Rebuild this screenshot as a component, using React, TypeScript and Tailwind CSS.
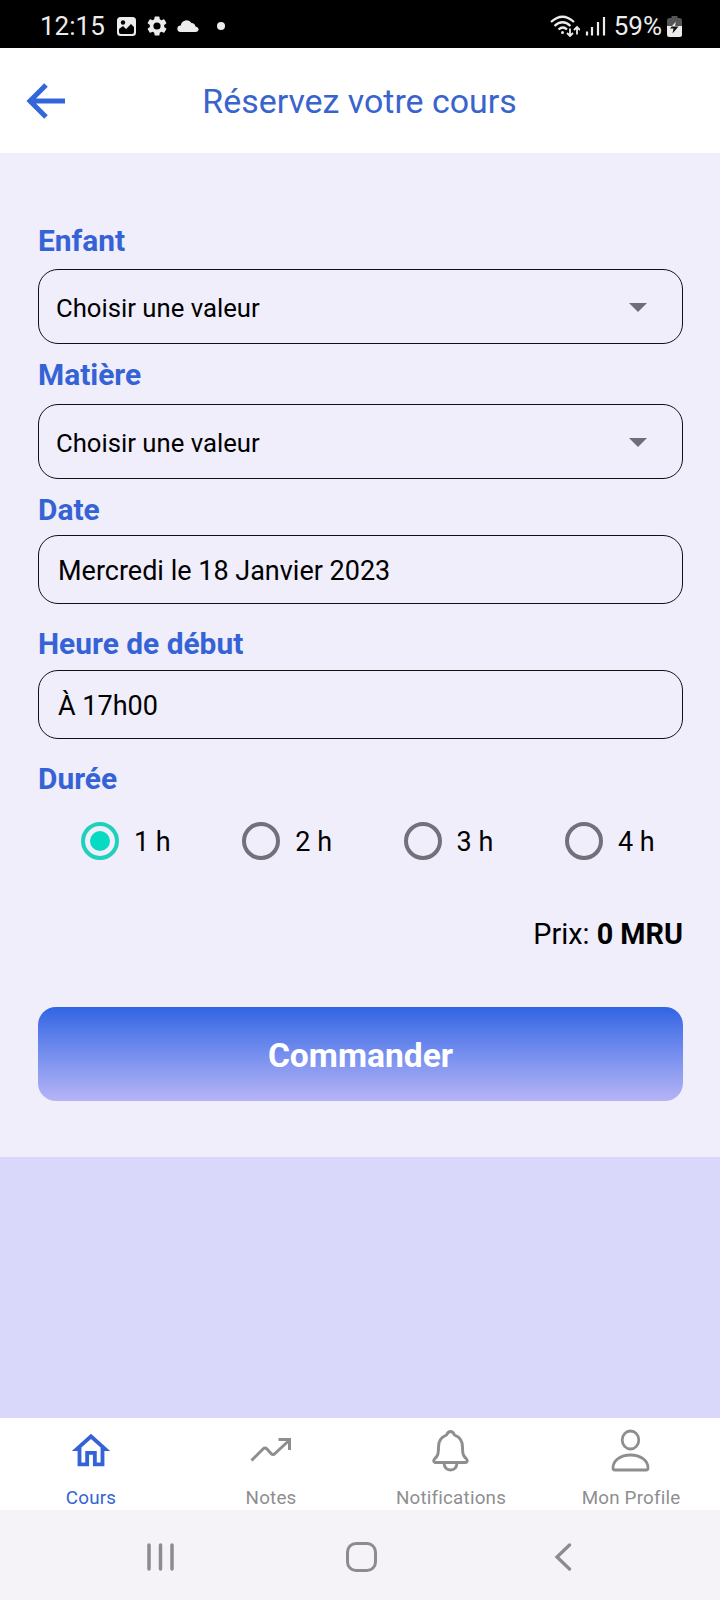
import type { ReactNode } from 'react'

const DURATIONS = ['1 h', '2 h', '3 h', '4 h']

function StatusBar() {
  return (
    <div className="flex h-12 items-center bg-black pt-1 pr-[38px] pl-10 text-[26px] leading-8 text-[#ececec]">
      <span>12:15</span>
      <svg className="ml-3 h-[19px] w-[19px]" viewBox="0 0 19 19" fill="none">
        <rect width="19" height="19" rx="3.5" fill="#ececec" />
        <path d="M2 14v-2l4-3 3 3 5-5 3 3v5q0 2-2 2H4q-2 0-2-2z" fill="#000" />
        <circle cx="6" cy="5.5" r="2.2" fill="#000" />
      </svg>
      <svg className="ml-[9px] h-6 w-6" viewBox="0 0 24 24" fill="currentColor">
        <path d="M19.14 12.94c.04-.3.06-.61.06-.94s-.02-.64-.07-.94l2.03-1.58a.5.5 0 0 0 .12-.61l-1.92-3.32a.5.5 0 0 0-.59-.22l-2.39.96a7 7 0 0 0-1.62-.94l-.36-2.54a.48.48 0 0 0-.48-.41h-3.84a.48.48 0 0 0-.47.41l-.36 2.54c-.59.24-1.13.57-1.62.94l-2.39-.96a.48.48 0 0 0-.59.22L2.74 8.87a.48.48 0 0 0 .12.61l2.03 1.58a6 6 0 0 0 0 1.88l-2.03 1.58a.5.5 0 0 0-.12.61l1.92 3.32c.12.22.37.29.59.22l2.39-.96c.5.38 1.03.7 1.62.94l.36 2.54c.05.24.24.41.48.41h3.84c.24 0 .44-.17.47-.41l.36-2.54a7 7 0 0 0 1.62-.94l2.39.96c.22.08.47 0 .59-.22l1.92-3.32a.48.48 0 0 0-.12-.61zM12 15.6a3.6 3.6 0 1 1 0-7.2 3.6 3.6 0 0 1 0 7.2" />
      </svg>
      <svg className="ml-2 h-[14px] w-[22px]" viewBox="0 0 22 14" fill="currentColor">
        <path d="M3.5 13a3.3 3.3 0 0 1 .3-6.6A5.8 5.8 0 0 1 14.5 4q3.3.4 4 3.5Q22 8.5 21.5 11q-.5 2-3 2z" />
      </svg>
      <span className="ml-[18px] h-2 w-2 rounded-full bg-[#ececec]" />
      <svg className="ml-auto h-6 w-[30px]" viewBox="0 0 30 24" fill="none" stroke="currentColor" strokeWidth="2.2">
        <path d="M1 8q11.5-10.5 23 0M4.5 12q8-7.5 16 0M8.5 15.5q4.5-4 8.5 0" />
        <circle cx="12.5" cy="18.5" r="1.5" fill="currentColor" stroke="none" />
        <path d="M20 14.5v7m-3-2.5 3 3 3-3M27 20.5v-7m-3 2.5 3-3 3 3" strokeWidth="1.8" />
      </svg>
      <svg className="h-5 w-[26px]" viewBox="0 0 26 20" stroke="currentColor" strokeWidth="2.2">
        <path d="M7 19.5v-4M12 19.5V11M18 19.5V6M24 19.5V1" />
      </svg>
      <span className="ml-2">59%</span>
      <svg className="ml-[5px] h-[21px] w-[15px]" viewBox="0 0 15 21">
        <path d="M4.5 0h6v2h2Q15 2 15 4.5V11H0V4.5Q0 2 2.5 2h2z" fill="#555" />
        <path d="M0 10h15v8.5Q15 21 12.5 21h-10Q0 21 0 18.5z" fill="#ececec" />
        <path d="M9 5.5 3 12.5h3.5l-1 5 6-7H8z" fill="#111" />
        <path d="M9 5.5 4.5 10.5H8z" fill="#ececec" />
      </svg>
    </div>
  )
}

function Header() {
  return (
    <header className="flex h-[105px] items-center bg-white pl-[26px] text-[#3864cc]">
      <svg className="h-9 w-10" viewBox="0 0 40 36" fill="none" stroke="#3366dd" strokeWidth="5">
        <path d="M39 18H4M20 2 4 18l16 16" />
      </svg>
      <h1 className="flex-1 pt-0.5 pr-[67px] text-center text-[33.9px] leading-10">Réservez votre cours</h1>
    </header>
  )
}

function Label({ children }: { children: ReactNode }) {
  return <div className="text-[29.9px] leading-[34px] font-bold text-[#3563d6]">{children}</div>
}

function SelectField({ label, className }: { label: string; className: string }) {
  return (
    <div className={`flex flex-col justify-between ${className}`}>
      <Label>{label}</Label>
      <button className="flex h-[75px] w-full items-center justify-between rounded-[20px] border border-[#111] pt-0.5 pr-[35px] pl-[17px] text-[25.7px] leading-8 text-black">
        Choisir une valeur
        <svg className="h-[9px] w-[18px]" viewBox="0 0 18 9" fill="#6f6d78">
          <path d="M0 0h18L9 9z" />
        </svg>
      </button>
    </div>
  )
}

function TextField({ label, value, className }: { label: string; value: string; className: string }) {
  return (
    <div className={`flex flex-col justify-between ${className}`}>
      <Label>{label}</Label>
      <div className="flex h-[69px] items-center rounded-[20px] border border-[#111] pt-0.5 pl-[19px] text-[27px] leading-8 text-black">
        {value}
      </div>
    </div>
  )
}

function Tab({ label, active, children }: { label: string; active?: boolean; children: ReactNode }) {
  return (
    <button className={active ? 'flex flex-col items-center text-[#3563d6]' : 'flex flex-col items-center text-[#8e8e90]'}>
      <span className="flex h-[68px] flex-col">{children}</span>
      <span className="pl-0.5 text-[18.8px] leading-6 tracking-[0.2px]">{label}</span>
    </button>
  )
}

function TabBar() {
  return (
    <nav className="grid h-[92px] grid-cols-4 bg-white">
      <Tab label="Cours" active>
        <svg className="mt-2.5 ml-px h-[46px] w-[46px]" viewBox="0 0 24 24" fill="currentColor">
          <path d="M12 5.69l5 4.5V18h-2v-6H9v6H7v-7.81l5-4.5M12 3 2 12h3v8h6v-6h2v6h6v-8h3z" />
        </svg>
      </Tab>
      <Tab label="Notes">
        <svg className="mt-[18px] h-7 w-[42px]" viewBox="0 0 42 28" fill="none" stroke="currentColor" strokeWidth="3">
          <path d="M2.5 24.5 14 13q2-2 4 0l4 4.5q2 2 4 0L40.5 4M29.5 3.5h11V14" />
        </svg>
      </Tab>
      <Tab label="Notifications">
        <svg className="mt-[11px] h-[43px] w-[38px]" viewBox="0 0 38 43" fill="none" stroke="currentColor" strokeWidth="2.9" strokeLinejoin="round">
          <path d="M19.5 2.5q-2.5 0-4 3.5-8 3-8 12c0 8-1 9-4 12-1.500 2-.5 3.500 1 3.500h30c1.500 0 2.500-1.500 1-3.500-3-3-4-4-4-12q0-9-8-12-1.500-3.500-4-3.500zM13 34q.5 7 6.500 7t6.500-7" />
        </svg>
      </Tab>
      <Tab label="Mon Profile">
        <svg className="mt-[11px] h-[43px] w-10" viewBox="0 0 40 43" fill="none" stroke="currentColor" strokeWidth="2.8">
          <ellipse cx="20.5" cy="11" rx="8.3" ry="9" />
          <path d="M20.5 26C10.5 26 3 31.5 3 39q0 2 2 2h31q2 0 2-2c0-7.5-7.5-13-17.5-13z" />
        </svg>
      </Tab>
    </nav>
  )
}

function SystemNav() {
  return (
    <div className="flex h-[90px] items-center bg-[#f5f3f7] pt-1 pl-[147px] text-[#8c8b8f]">
      <svg className="h-7 w-[27px]" viewBox="0 0 27 28" stroke="currentColor" strokeWidth="3.5" strokeLinecap="round">
        <path d="M2 2v24M13.5 2v24M25 2v24" />
      </svg>
      <span className="ml-[172px] h-[30px] w-[31px] rounded-[10px] border-[3px] border-current" />
      <svg className="ml-[177px] h-7 w-[18px]" viewBox="0 0 18 28" fill="none" stroke="currentColor" strokeWidth="3.3" strokeLinecap="round">
        <path d="M15.500 2 3 14l12.500 12" />
      </svg>
    </div>
  )
}

export default function App() {
  return (
    <div className="flex h-[1600px] w-[720px] flex-col bg-[#d9d8fa] font-[Roboto,sans-serif]">
      <StatusBar />
      <Header />
      <main className="h-[1004px] bg-[#f0eefb] pt-[71px] pr-[37px] pl-[38px]">
        <SelectField label="Enfant" className="h-[120px]" />
        <SelectField label="Matière" className="mt-3.5 h-[121px]" />
        <TextField label="Date" value="Mercredi le 18 Janvier 2023" className="mt-3.5 h-[111px]" />
        <TextField label="Heure de début" value="À 17h00" className="mt-[23px] h-[112px]" />
        <div className="mt-[23px]">
          <Label>Durée</Label>
          <div className="mt-[26px] flex pl-[43px] text-[27px] leading-8 text-black">
            {DURATIONS.map((duration, i) => (
              <div key={duration} className="flex h-[38px] w-[161.3px] shrink-0 items-center">
                {i === 0 ? (
                  <span className="flex h-[38px] w-[38px] items-center justify-center rounded-full border-4 border-[#1fd1bd]">
                    <span className="h-5 w-5 rounded-full bg-[#07dac3]" />
                  </span>
                ) : (
                  <span className="h-[38px] w-[38px] rounded-full border-4 border-[#727079]" />
                )}
                <span className="pt-0.5 pl-[15px]">{duration}</span>
              </div>
            ))}
          </div>
        </div>
        <div className="mt-[58px] text-right text-[28.8px] leading-8 text-black">
          Prix: <b>0 MRU</b>
        </div>
        <button className="mt-[57px] h-[94px] w-full rounded-[18px] bg-linear-to-b from-[#3064e3] to-[#b7b4f6] pt-1 text-[33.6px] font-bold text-white">
          Commander
        </button>
      </main>
      <div className="flex-1" />
      <TabBar />
      <SystemNav />
    </div>
  )
}
